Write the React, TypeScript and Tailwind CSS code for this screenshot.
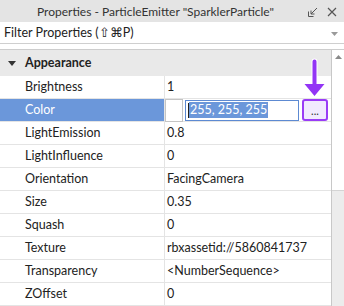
import React from 'react';

const rows: { name: string; value: string }[] = [
  { name: 'Brightness', value: '1' },
  { name: 'Color', value: '' },
  { name: 'LightEmission', value: '0.8' },
  { name: 'LightInfluence', value: '0' },
  { name: 'Orientation', value: 'FacingCamera' },
  { name: 'Size', value: '0.35' },
  { name: 'Squash', value: '0' },
  { name: 'Texture', value: 'rbxassetid://5860841737' },
  { name: 'Transparency', value: '<NumberSequence>' },
  { name: 'ZOffset', value: '0' },
];

function UndockIcon() {
  return (
    <svg width="12" height="12" viewBox="0 0 12 12" fill="none" stroke="#555" strokeWidth="1">
      <path d="M1.5 5.5v5h5" />
      <path d="M4 8L10 2M4 8h3.5M4 8V4.5" />
    </svg>
  );
}

function ColorValue() {
  return (
    <div className="flex h-full items-center">
      <div className="h-[23px] w-[18px] border border-[#c4c4c4] bg-white" />
      <div className="ml-[2px] flex h-[21px] w-[114px] items-center border border-[#5d8ad2] bg-white pl-[2px]">
        <span className="h-[15px] w-px bg-[#222]" />
        <span className="bg-[#6b97da] px-[1px] leading-[16px] text-white">255, 255, 255</span>
      </div>
      <div className="ml-[3px] flex h-[22px] w-[26px] items-center justify-center rounded-[3px] border-2 border-[#9a3cf6] bg-[#f1eafe] text-[11px] leading-none text-[#333]">
        ...
      </div>
    </div>
  );
}

export default function App() {
  return (
    <div className="relative flex h-[306px] w-[344px] flex-col overflow-hidden bg-white font-['Lato','Noto_Sans',sans-serif] text-[12.5px] text-[#222]">
      {/* Title bar */}
      <div className="flex h-[22px] items-center bg-[#e4e4e4] pt-[1px]">
        <div className="flex-1 pl-[37px] text-[12px] text-[#333]">Properties - ParticleEmitter "SparklerParticle"</div>
        <div className="flex w-[38px] items-center gap-[8px] pl-[1px]">
          <UndockIcon />
          <svg width="10" height="10" viewBox="0 0 10 10" stroke="#555" strokeWidth="1.2">
            <path d="M1 1l8 8M9 1l-8 8" />
          </svg>
        </div>
      </div>

      {/* Filter */}
      <div className="flex h-[22px] items-center justify-between border-b border-[#cfcfcf] pl-[4px] pr-[6px] pt-[2px]">
        <span>Filter Properties (⇧⌘P)</span>
        <svg width="7" height="4" viewBox="0 0 7 4">
          <path d="M0 0h7L3.5 4z" fill="#9a9a9a" />
        </svg>
      </div>

      <div className="h-[5px]" />

      {/* Grid */}
      <div className="flex flex-1 border-t border-[#cdcdcd]">
        <div className="flex flex-1 flex-col">
          <div className="flex h-[26px] items-center gap-[9px] bg-[#e9e9e9] pl-[8px] font-bold">
            <svg width="8" height="5" viewBox="0 0 8 5">
              <path d="M0 0h8L4 5z" fill="#333" />
            </svg>
            <span>Appearance</span>
          </div>
          {rows.map((r) => (
            <div
              key={r.name}
              className={
                r.name === 'Color'
                  ? 'flex h-[23px] shrink-0 border-b border-[#e4e4e4] bg-[#6b97da] text-white'
                  : 'flex h-[23px] shrink-0 border-b border-[#e4e4e4]'
              }
            >
              <div className="flex w-[165px] items-center border-r border-[#e4e4e4] pl-[25px]">{r.name}</div>
              {r.name === 'Color' ? (
                <div className="flex flex-1 items-center bg-white text-[#222]">
                  <ColorValue />
                </div>
              ) : (
                <div className="flex flex-1 items-center bg-white pl-[2px] text-[#222]">{r.value}</div>
              )}
            </div>
          ))}
        </div>

        {/* Scrollbar */}
        <div className="flex w-[13px] flex-col border-l border-[#c8c8c8]">
          <div className="flex h-[14px] items-center justify-center">
            <svg width="7" height="4" viewBox="0 0 7 4">
              <path d="M0 4h7L3.5 0z" fill="#8a8a8a" />
            </svg>
          </div>
          <div className="h-[126px] bg-white" />
          <div className="flex-1 border-t border-[#d4d4d4] bg-[#ececec]" />
        </div>
      </div>

      {/* Callout arrow */}
      <svg className="absolute left-[302px] top-[57px]" width="26" height="42" viewBox="0 0 26 42">
        <path
          d="M10.5 4.5a2 2 0 0 1 4 0V27h8L12.5 39 2.5 27h8z"
          fill="#9335f5"
          stroke="white"
          strokeWidth="2"
          strokeLinejoin="round"
          paintOrder="stroke"
        />
      </svg>
    </div>
  );
}
